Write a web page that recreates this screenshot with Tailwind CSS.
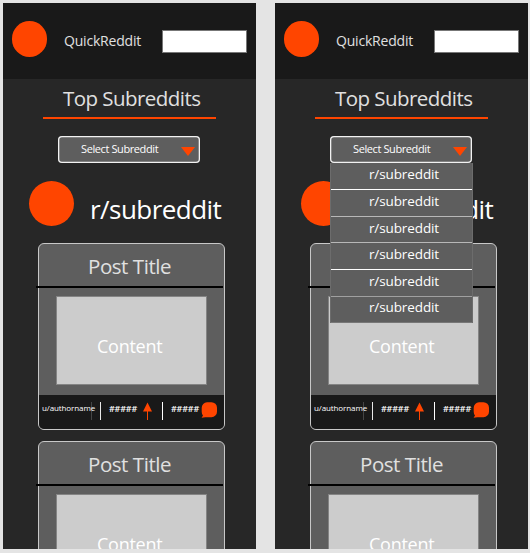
<!DOCTYPE html>
<html lang="en">
<head>
<meta charset="utf-8">
<title>QuickReddit</title>
<script src="https://cdn.jsdelivr.net/npm/@tailwindcss/browser@4"></script>
</head>
<body class="h-[553px] w-[530px] overflow-hidden bg-[#e4e4e4] font-['Open_Sans','Noto_Sans',sans-serif] whitespace-nowrap">
<main class="flex gap-[19px] pt-[3px] pl-[3px]"></main>

<template id="post">
  <article class="mb-[11px] ml-[35px] h-[187px] w-[187px] shrink-0 rounded-[6px] border border-[#c8c8c8] bg-[#5e5e5e]">
    <h3 class="h-[42px] pt-[7px] pl-[49px] text-[20.5px] leading-[30px] tracking-[-0.45px] text-[#e0e0e0]">Post Title</h3>
    <div class="-ml-[3px] h-[2px] w-[187px] bg-black"></div>
    <div class="mt-[8px] ml-[17px] h-[89px] w-[151px] border border-[#848484] bg-[#cccccc] pt-[36px] pl-[40px] text-[18px] leading-[26px] tracking-[-0.25px] text-white">Content</div>
    <footer class="mt-[10px] flex h-[34px] rounded-b-[5px] bg-[#191919] pt-[7px] text-white">
      <span class="relative z-10 ml-[3px] w-[49px] text-[8px] leading-[12px] tracking-[-0.1px]">u/authorname</span>
      <i class="h-[18px] w-px bg-[#454545]"></i>
      <i class="ml-[8px] h-[18px] w-px bg-[#e8e8e8]"></i>
      <span class="ml-[8px] w-[28px] text-[9px] leading-[14px] font-semibold tracking-[-0.2px]">#####</span>
      <svg class="ml-[6px] h-[18px] w-[10px]" viewBox="0 0 10 18"><path d="M4.500 .5 9 9.500H0Z" fill="#ff4500"/><path d="M4.500 9v9" stroke="#ff4500"/></svg>
      <i class="ml-[9px] h-[18px] w-px bg-white"></i>
      <span class="ml-[8px] w-[28px] text-[9px] leading-[14px] font-semibold tracking-[-0.2px]">#####</span>
      <svg class="ml-[2px] h-[16px] w-[16px]" viewBox="0 0 16 16"><path d="M6 .2h4.500A5.500 5.500 0 0 1 16 5.700v4A5.500 5.500 0 0 1 10.500 15.200H5Q3 15 .6 15.800L2 13.500Q.7 12 .7 9.700V5.700A5.500 5.500 0 0 1 6 .2Z" fill="#ff4500"/></svg>
    </footer>
  </article>
</template>

<template id="screen">
  <section class="relative flex h-[546px] w-[253px] flex-col overflow-hidden bg-[#272727]">
    <header class="flex h-[76px] shrink-0 bg-[#191919]">
      <div class="mt-[18px] ml-[8.5px] size-[35.5px] rounded-full bg-[#ff4500]"></div>
      <span class="mt-[28px] ml-[17px] w-[98px] text-[14px] leading-[20px] tracking-[-0.2px] text-[#e0e0e0]">QuickReddit</span>
      <div class="mt-[27px] h-[23px] w-[85px] border border-[#777] bg-white"></div>
    </header>
    <h1 class="h-[38px] shrink-0 pt-[4px] pl-[60px] text-[20.5px] leading-[30px] tracking-[-0.55px] text-[#e0e0e0]">Top Subreddits</h1>
    <div class="ml-[40px] h-[2px] w-[173px] shrink-0 bg-[#ff4500]"></div>
    <div class="mt-[17px] ml-[55px] flex h-[27px] w-[142px] shrink-0 rounded-[4px] bg-[#5e5e5e] inset-ring-[1.3px] inset-ring-[#f2f2f2]">
      <span class="mt-[5px] ml-[23px] w-[100px] text-[11px] leading-[16px] tracking-[-0.4px] text-white">Select Subreddit</span>
      <svg class="mt-[11px] h-[9px] w-[14px]" viewBox="0 0 14 9"><path d="M0 0h14L7 9Z" fill="#ff4500"/></svg>
    </div>
    <div class="flex h-[80px] shrink-0">
      <div class="mt-[18px] ml-[26px] size-[45px] rounded-full bg-[#ff4500]"></div>
      <h2 class="mt-[28px] ml-[16px] text-[26px] leading-[36px] tracking-[-0.55px] text-white">r/subreddit</h2>
    </div>
  </section>
</template>

<template id="menu">
  <ul class="absolute top-[160px] left-[55px] w-[143px] border-x border-[#6c6c6c] bg-[#5e5e5e] text-center text-[13.5px] leading-[22px] tracking-[-0.1px] text-white">
    <li class="h-[27px] border-b border-white pl-[5px]">r/subreddit</li>
    <li class="h-[27px] border-b border-[#b8b8b8] pl-[5px]">r/subreddit</li>
    <li class="h-[26px] border-b border-[#b8b8b8] pl-[5px]">r/subreddit</li>
    <li class="h-[27px] border-b border-white pl-[5px]">r/subreddit</li>
    <li class="h-[27px] border-b border-[#a0a0a0] pl-[5px]">r/subreddit</li>
    <li class="h-[26px] border-b border-[#777] pl-[5px] leading-[21px]">r/subreddit</li>
  </ul>
</template>

<script>
  const copy = id => document.getElementById(id).content.firstElementChild.cloneNode(true);
  const main = document.querySelector('main');
  for (const open of [false, true]) {
    const screen = copy('screen');
    screen.append(copy('post'), copy('post'));
    if (open) screen.append(copy('menu'));
    main.append(screen);
  }
</script>
</body>
</html>
